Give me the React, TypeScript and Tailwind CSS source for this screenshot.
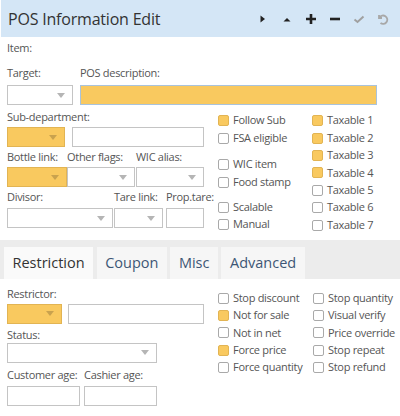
import React from "react";

const ORANGE = "bg-[#f9c95f]";

function Arrow({ dark }: { dark?: boolean }) {
  return (
    <svg width="8" height="5" viewBox="0 0 8 5" className="shrink-0">
      <path d="M0 0 H8 L4 5 Z" fill={dark ? "#c9a24e" : "#b5b5b5"} />
    </svg>
  );
}

function Select({ w, orange }: { w: string; orange?: boolean }) {
  return (
    <div
      className={`${w} h-[20px] flex items-center justify-end pr-[7px] border ${
        orange ? `${ORANGE} border-[#e2b453]` : "bg-white border-[#c4c4c4]"
      }`}
    >
      <Arrow dark={orange} />
    </div>
  );
}

function Input({ w, orange }: { w: string; orange?: boolean }) {
  return (
    <div
      className={`${w} h-[20px] border ${
        orange ? `${ORANGE} border-[#a9c3dc]` : "bg-white border-[#c4c4c4]"
      }`}
    />
  );
}

function Label({ children, className = "" }: { children: React.ReactNode; className?: string }) {
  return (
    <div className={`text-[11px] leading-[14px] tracking-[-0.3px] text-[#555] whitespace-nowrap ${className}`}>
      {children}
    </div>
  );
}

function Check({ label, on, className = "h-[17.4px]" }: { label: string; on?: boolean; className?: string }) {
  return (
    <div className={`flex items-center ${className}`}>
      <span
        className={`w-[11px] h-[11px] rounded-[2px] border mr-[4px] shrink-0 ${
          on ? `${ORANGE} border-[#e2b453]` : "bg-white border-[#a9a9a9]"
        }`}
      />
      <span className="text-[11px] tracking-[-0.3px] text-[#555] whitespace-nowrap">{label}</span>
    </div>
  );
}

function Tab({ label, active }: { label: string; active?: boolean }) {
  return (
    <div
      className={`h-[32px] px-[8.5px] flex items-center text-[14.5px] ${
        active ? "bg-[#fafafa] text-[#333]" : "bg-[#f6f6f6] text-[#3d5675]"
      }`}
    >
      {label}
    </div>
  );
}

export default function App() {
  return (
    <div className="w-[400px] h-[416px] bg-white overflow-hidden" style={{ fontFamily: '"Open Sans", sans-serif' }}>
      {/* Header */}
      <div className="h-[37px] bg-[#d4e6f6] flex items-center justify-between pl-[7px] pr-[11px] border-l border-white">
        <div className="text-[16px] text-[#333] tracking-[-0.2px]">POS Information Edit</div>
        <div className="flex items-center gap-[12px]">
          <svg width="12" height="12" viewBox="0 0 12 12">
            <path d="M3.5 2.5 L8 6 L3.5 9.5 Z" fill="#222" />
          </svg>
          <svg width="12" height="12" viewBox="0 0 12 12">
            <path d="M2.5 8.5 L6 5 L9.5 8.5 Z" fill="#222" />
          </svg>
          <svg width="12" height="12" viewBox="0 0 12 12">
            <path d="M6 1 V11 M1 6 H11" stroke="#222" strokeWidth="2.6" />
          </svg>
          <svg width="12" height="12" viewBox="0 0 12 12">
            <path d="M1 6 H11" stroke="#222" strokeWidth="2.6" />
          </svg>
          <svg width="12" height="12" viewBox="0 0 12 12">
            <path d="M1.5 6.5 L4.5 9 L10.5 3.5" stroke="#a0a0a0" strokeWidth="2" fill="none" />
          </svg>
          <svg width="12" height="12" viewBox="0 0 12 12">
            <path d="M2 2 V5 H5 M2.5 4.5 A4.2 4.2 0 1 1 3.5 10" stroke="#a8a8a8" strokeWidth="1.8" fill="none" />
          </svg>
        </div>
      </div>

      {/* Top section */}
      <div className="px-[7px]">
        <Label className="mt-[4px]">Item:</Label>
        <div className="flex gap-[7px] mt-[11px]">
          <div>
            <Label>Target:</Label>
            <div className="mt-[5px]">
              <Select w="w-[66px]" />
            </div>
          </div>
          <div>
            <Label>POS description:</Label>
            <div className="mt-[5px]">
              <Input w="w-[297px]" orange />
            </div>
          </div>
        </div>

        <div className="flex">
          <div className="w-[197px]">
            <Label className="mt-[5px]">Sub-department:</Label>
            <div className="flex gap-[7px] mt-[3px]">
              <Select w="w-[58px]" orange />
              <Input w="w-[132px]" />
            </div>
            <div className="flex mt-[3px]">
              <div className="w-[60px]">
                <Label>Bottle link:</Label>
                <div className="mt-[3px]">
                  <Select w="w-[60px]" orange />
                </div>
              </div>
              <div className="w-[69px]">
                <Label>Other flags:</Label>
                <div className="mt-[3px]">
                  <Select w="w-[68px]" />
                </div>
              </div>
              <div className="w-[68px]">
                <Label>WIC alias:</Label>
                <div className="mt-[3px]">
                  <Select w="w-[68px]" />
                </div>
              </div>
            </div>
            <div className="flex mt-[3px]">
              <div className="w-[107px]">
                <Label>Divisor:</Label>
                <div className="mt-[4px]">
                  <Select w="w-[106px]" />
                </div>
              </div>
              <div className="w-[52px]">
                <Label>Tare link:</Label>
                <div className="mt-[4px]">
                  <Select w="w-[49px]" />
                </div>
              </div>
              <div className="w-[38px]">
                <Label>Prop.tare:</Label>
                <div className="mt-[4px]">
                  <Input w="w-[38px]" />
                </div>
              </div>
            </div>
          </div>

          <div className="flex ml-[14px] mt-[7px]">
            <div className="w-[94px]">
              <Check label="Follow Sub" on className="h-[17px]" />
              <Check label="FSA eligible" className="h-[17px] mt-[1px]" />
              <Check label="WIC item" className="h-[17px] mt-[9px]" />
              <Check label="Food stamp" className="h-[17px] mt-[1px]" />
              <Check label="Scalable" className="h-[17px] mt-[8px]" />
              <Check label="Manual" className="h-[17px]" />
            </div>
            <div>
              <Check label="Taxable 1" on />
              <Check label="Taxable 2" on />
              <Check label="Taxable 3" on />
              <Check label="Taxable 4" on />
              <Check label="Taxable 5" />
              <Check label="Taxable 6" />
              <Check label="Taxable 7" />
            </div>
          </div>
        </div>
      </div>

      {/* Tabs */}
      <div className="mt-[6px] h-[39px] bg-[#ececec] flex items-end gap-[3.5px] pl-[4px]">
        <Tab label="Restriction" active />
        <Tab label="Coupon" />
        <Tab label="Misc" />
        <Tab label="Advanced" />
      </div>

      {/* Restriction section */}
      <div className="px-[7px] flex">
        <div className="w-[197px]">
          <Label className="mt-[8px]">Restrictor:</Label>
          <div className="flex gap-[6px] mt-[3px]">
            <Select w="w-[55px]" orange />
            <Input w="w-[137px]" />
          </div>
          <Label className="mt-[4px]">Status:</Label>
          <div className="mt-[1px]">
            <Select w="w-[150px]" />
          </div>
          <div className="flex gap-[4px] mt-[5px]">
            <div>
              <Label>Customer age:</Label>
              <div className="mt-[4px]">
                <Input w="w-[73px]" />
              </div>
            </div>
            <div>
              <Label>Cashier age:</Label>
              <div className="mt-[4px]">
                <Input w="w-[73px]" />
              </div>
            </div>
          </div>
        </div>
        <div className="flex ml-[14px] mt-[11px]">
          <div className="w-[95px]">
            <Check label="Stop discount" className="h-[17.25px]" />
            <Check label="Not for sale" on className="h-[17.25px]" />
            <Check label="Not in net" className="h-[17.25px]" />
            <Check label="Force price" on className="h-[17.25px]" />
            <Check label="Force quantity" className="h-[17.25px]" />
          </div>
          <div>
            <Check label="Stop quantity" className="h-[17.25px]" />
            <Check label="Visual verify" className="h-[17.25px]" />
            <Check label="Price override" className="h-[17.25px]" />
            <Check label="Stop repeat" className="h-[17.25px]" />
            <Check label="Stop refund" className="h-[17.25px]" />
          </div>
        </div>
      </div>
    </div>
  );
}
